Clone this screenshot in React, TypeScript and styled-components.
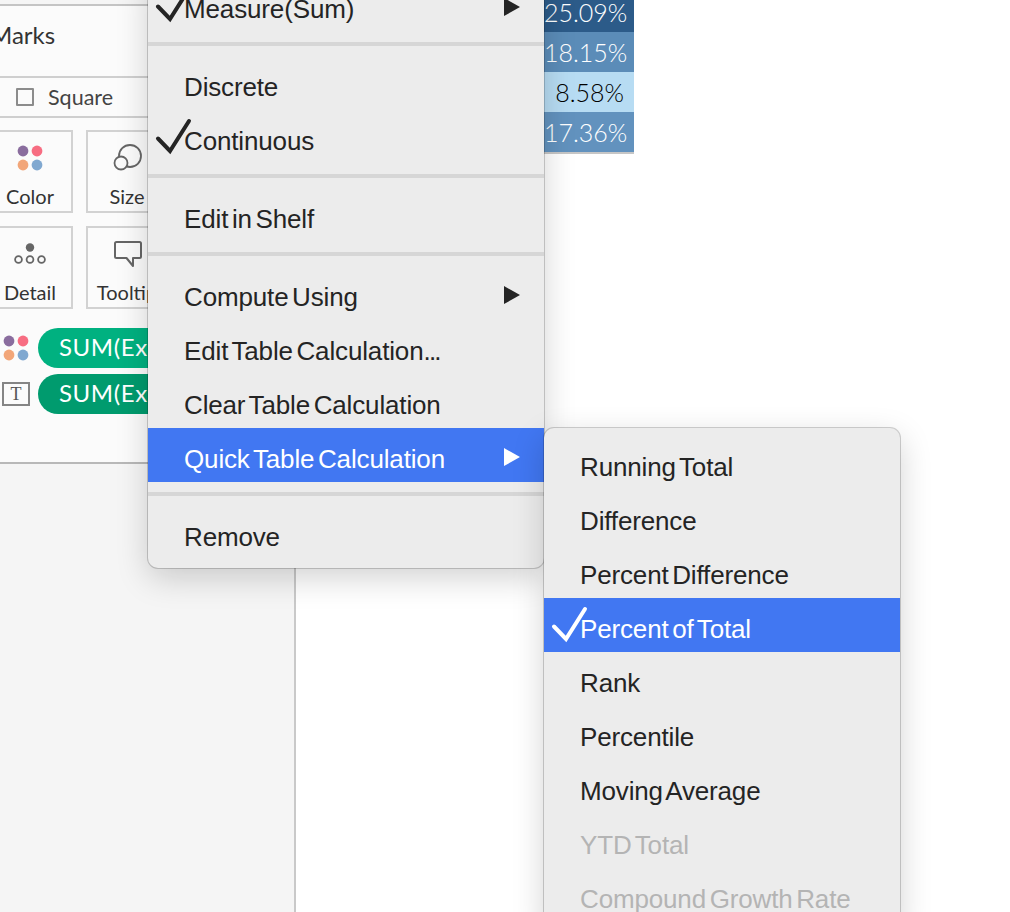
import React from "react";
import styled, { createGlobalStyle } from "styled-components";

const Global = createGlobalStyle`
  html, body { margin: 0; padding: 0; background: #fff; }
  body { font-family: "Lato", "Liberation Sans", sans-serif; }
`;

const Stage = styled.div`
  position: relative;
  width: 1010px;
  height: 912px;
  overflow: hidden;
  display: flex;
  background: #fff;
`;

const Sidebar = styled.aside`
  width: 296px;
  box-sizing: border-box;
  flex: none;
  background: #f5f5f5;
  border-right: 2px solid #c9c9c9;
  padding-top: 4px;
`;

const MarksPanel = styled.section`
  background: #fbfbfb;
  border-top: 2px solid #c4c4c4;
  border-bottom: 2px solid #b8b8b8;
  height: 460px;
  box-sizing: border-box;
  margin-left: -13px;
  display: flex;
  flex-direction: column;
`;

const MarksTitle = styled.div`
  height: 70px;
  box-sizing: border-box;
  padding: 14px 0 0 3px;
  font-size: 24px;
  line-height: 30px;
  color: #333;
`;

const TypeRow = styled.div`
  height: 42px;
  box-sizing: border-box;
  border-top: 2px solid #cfcfcf;
  border-bottom: 2px solid #cfcfcf;
  display: flex;
  align-items: center;
  padding-left: 29px;
  gap: 14px;
  font-size: 21.5px;
  color: #444;
`;

const CheckBox = styled.span`
  width: 14px;
  height: 14px;
  border: 2px solid #8c8c8c;
  border-radius: 1px;
`;

const CardGrid = styled.div`
  display: grid;
  grid-template-columns: 86px 82px;
  grid-auto-rows: 83px;
  gap: 13px;
  margin-top: 12px;
`;

const Card = styled.div`
  box-sizing: border-box;
  border: 2px solid #d2d2d2;
  display: flex;
  flex-direction: column;
  align-items: center;
  font-size: 20px;
  line-height: 24px;
  color: #333;
  padding-top: 12px;
`;

const CardIcon = styled.span`
  height: 28px;
  display: flex;
  align-items: center;
  justify-content: center;
`;

const CardLabel = styled.span`
  margin-top: 12px;
  white-space: nowrap;
`;

const PillRow = styled.div`
  display: flex;
  align-items: center;
  height: 40px;
  margin-bottom: 6px;
  padding-left: 16px;
  gap: 9px;
`;

const PillStack = styled.div`
  margin-top: 19px;
`;

const PillIconSlot = styled.span`
  width: 26px;
  display: flex;
  justify-content: center;
  flex: none;
`;

const Pill = styled.div<{ $tone: string }>`
  width: 150px;
  height: 40px;
  box-sizing: border-box;
  border-radius: 20px;
  background: ${(p) => p.$tone};
  color: #fff;
  font-size: 24px;
  letter-spacing: 0.6px;
  line-height: 38px;
  padding-left: 21px;
  overflow: hidden;
  white-space: nowrap;
`;

const TextBadge = styled.span`
  width: 24px;
  height: 20px;
  flex: none;
  border: 2px solid #858585;
  display: flex;
  align-items: center;
  justify-content: center;
  font-family: "Liberation Serif", serif;
  font-size: 18px;
  color: #555;
`;

const Main = styled.main`
  flex: 1;
  padding-left: 248px;
`;

const DataTable = styled.div`
  width: 90px;
  margin-top: -8px;
  border-bottom: 2px solid #c6c6c6;
`;

const DataCell = styled.div<{ $bg: string; $ink: string }>`
  height: 40px;
  box-sizing: border-box;
  background: ${(p) => p.$bg};
  color: ${(p) => p.$ink};
  text-align: right;
  padding-right: 10px;
  font-size: 25px;
  font-weight: 300;
  line-height: 41px;
  white-space: nowrap;
`;

const Menu = styled.div<{ $left: number; $top: number; $width: number }>`
  position: absolute;
  left: ${(p) => p.$left}px;
  top: ${(p) => p.$top}px;
  width: ${(p) => p.$width}px;
  box-sizing: border-box;
  padding: 8px 0;
  background: #ececec;
  border-radius: 10px;
  box-shadow: 0 0 0 1px rgba(0, 0, 0, 0.18), 0 10px 32px rgba(0, 0, 0, 0.18);
  font-family: "Liberation Sans", Arial, sans-serif;
  font-size: 26px;
  letter-spacing: -0.15px;
  word-spacing: -3.4px;
  color: #242424;
`;

const Row = styled.div<{ $active?: boolean; $disabled?: boolean }>`
  height: 54px;
  display: flex;
  align-items: center;
  padding-right: 24px;
  white-space: nowrap;
  background: ${(p) => (p.$active ? "#4177f2" : "transparent")};
  color: ${(p) => (p.$active ? "#fff" : p.$disabled ? "#b4b4b4" : "#242424")};
`;

const Gutter = styled.span`
  width: 36px;
  flex: none;
  display: flex;
`;

const Label = styled.span<{ $tight?: boolean }>`
  flex: 1;
  position: relative;
  top: 4px;
  line-height: 30px;
  word-spacing: ${(p) => (p.$tight ? "-7px" : "inherit")};
`;

const Dots3 = styled.span`
  letter-spacing: -1.8px;
`;

const Separator = styled.div`
  height: 4px;
  margin: 10px 0;
  background: #d6d6d6;
`;

const Arrow = styled.span<{ $color: string }>`
  width: 0;
  height: 0;
  margin-top: 4px;
  border-left: 16px solid ${(p) => p.$color};
  border-top: 9.5px solid transparent;
  border-bottom: 9.5px solid transparent;
`;

const CheckSvg = styled.svg`
  flex: none;
  width: 36px;
  height: 36px;
  margin: -6px -8px 0 8px;
  overflow: visible;
`;

const Check = ({ color }: { color: string }) => (
  <CheckSvg viewBox="0 0 36 36">
    <path d="M2 22.5 L14 35 L33 5" fill="none" stroke={color} strokeWidth="4" strokeLinecap="round" strokeLinejoin="miter" />
  </CheckSvg>
);

const Dots = ({ size }: { size: number }) => (
  <svg width={size} height={size} viewBox="0 0 26 26">
    <circle cx="6" cy="6" r="5.4" fill="#8a6d9e" />
    <circle cx="20" cy="6" r="5.4" fill="#f76d82" />
    <circle cx="6" cy="20" r="5.4" fill="#f2a679" />
    <circle cx="20" cy="20" r="5.4" fill="#80a8d0" />
  </svg>
);

const SizeIcon = () => (
  <svg width="30" height="28" viewBox="0 0 30 28" fill="none" stroke="#666" strokeWidth="1.8">
    <circle cx="18" cy="12" r="11" />
    <circle cx="9" cy="19" r="6.5" fill="#fbfbfb" />
  </svg>
);

const DetailIcon = () => (
  <svg width="34" height="28" viewBox="0 0 34 28">
    <circle cx="17" cy="7.500" r="4.200" fill="#666" />
    <g fill="none" stroke="#666" strokeWidth="1.8">
      <circle cx="5.500" cy="19.500" r="3.400" />
      <circle cx="17" cy="19.500" r="3.400" />
      <circle cx="28.500" cy="19.500" r="3.400" />
    </g>
  </svg>
);

const TooltipIcon = () => (
  <svg width="30" height="28" viewBox="0 0 30 28" fill="none" stroke="#666" strokeWidth="2" strokeLinejoin="round">
    <path d="M4.500 2 H27.500 a1.500 1.500 0 0 1 1.500 1.500 V16.500 a1.500 1.500 0 0 1 -1.500 1.500 H21 V26 L14.500 18 H4.500 a1.500 1.500 0 0 1 -1.500 -1.500 V3.500 a1.500 1.500 0 0 1 1.500 -1.500 Z" />
  </svg>
);

const cells = [
  { v: "25.09%", bg: "#2c5b89", ink: "#fff" },
  { v: "18.15%", bg: "#5b8cb8", ink: "#fff" },
  { v: "8.58%", bg: "#b7dcf3", ink: "#000" },
  { v: "17.36%", bg: "#6292be", ink: "#fff" },
];

const subItems: { t: string; active?: boolean; disabled?: boolean }[] = [
  { t: "Running Total" },
  { t: "Difference" },
  { t: "Percent Difference" },
  { t: "Percent of Total", active: true },
  { t: "Rank" },
  { t: "Percentile" },
  { t: "Moving Average" },
  { t: "YTD Total", disabled: true },
  { t: "Compound Growth Rate", disabled: true },
];

const MenuRow = ({ label, checked, arrow, active, disabled, tight }: {
  label: React.ReactNode; checked?: boolean; arrow?: boolean; active?: boolean; disabled?: boolean; tight?: boolean;
}) => (
  <Row $active={active} $disabled={disabled}>
    <Gutter>{checked && <Check color={active ? "#fff" : "#242424"} />}</Gutter>
    <Label $tight={tight}>{label}</Label>
    {arrow && <Arrow $color={active ? "#fff" : "#242424"} />}
  </Row>
);

export default function App() {
  return (
    <Stage>
      <Global />
      <Sidebar>
        <MarksPanel>
          <MarksTitle>Marks</MarksTitle>
          <TypeRow>
            <CheckBox />
            Square
          </TypeRow>
          <CardGrid>
            <Card><CardIcon><Dots size={26} /></CardIcon><CardLabel>Color</CardLabel></Card>
            <Card><CardIcon><SizeIcon /></CardIcon><CardLabel>Size</CardLabel></Card>
            <Card><CardIcon><DetailIcon /></CardIcon><CardLabel>Detail</CardLabel></Card>
            <Card><CardIcon><TooltipIcon /></CardIcon><CardLabel>Tooltip</CardLabel></Card>
          </CardGrid>
          <PillStack>
            <PillRow>
              <PillIconSlot><Dots size={26} /></PillIconSlot>
              <Pill $tone="#00b180">SUM(Exp</Pill>
            </PillRow>
            <PillRow>
              <PillIconSlot><TextBadge>T</TextBadge></PillIconSlot>
              <Pill $tone="#009b6e">SUM(Exp</Pill>
            </PillRow>
          </PillStack>
        </MarksPanel>
      </Sidebar>
      <Main>
        <DataTable>
          {cells.map((c) => (
            <DataCell key={c.v} $bg={c.bg} $ink={c.ink}>{c.v}</DataCell>
          ))}
        </DataTable>
      </Main>
      <Menu $left={148} $top={-30} $width={396}>
        <MenuRow label="Measure (Sum)" checked arrow tight />
        <Separator />
        <MenuRow label="Discrete" />
        <MenuRow label="Continuous" checked />
        <Separator />
        <MenuRow label="Edit in Shelf" />
        <Separator />
        <MenuRow label="Compute Using" arrow />
        <MenuRow label={<>Edit Table Calculation<Dots3>...</Dots3></>} />
        <MenuRow label="Clear Table Calculation" />
        <MenuRow label="Quick Table Calculation" arrow active />
        <Separator />
        <MenuRow label="Remove" />
      </Menu>
      <Menu $left={544} $top={428} $width={356}>
        {subItems.map((s) => (
          <MenuRow key={s.t} label={s.t} checked={s.active} active={s.active} disabled={s.disabled} />
        ))}
      </Menu>
    </Stage>
  );
}
